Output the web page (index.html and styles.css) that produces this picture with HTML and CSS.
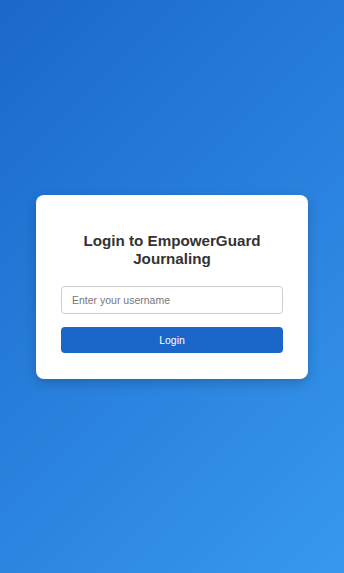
FILE: index.html
```html
<!DOCTYPE html>
<html lang="en">
<head>
<meta charset="utf-8">
<title>Login</title>
<link rel="stylesheet" href="styles.css">
</head>
<body>
<main class="page">
  <form class="card">
    <h2 class="title">Login to EmpowerGuard Journaling</h2>
    <input class="field" type="text" placeholder="Enter your username">
    <button class="btn" type="button">Login</button>
  </form>
</main>
</body>
</html>
```

FILE: styles.css
```css
html, body {
  margin: 0;
  padding: 0;
  height: 100%;
}
body {
  font-family: "Liberation Sans", Arial, sans-serif;
  background: linear-gradient(135deg, #1a68c9 0%, #3798ef 100%);
}
.page {
  height: 100%;
  display: flex;
  align-items: center;
  justify-content: center;
}
.card {
  box-sizing: border-box;
  width: 272px;
  background: #fff;
  border-radius: 8px;
  box-shadow: 0 4px 12px rgba(0, 0, 0, 0.2);
  padding: 37px 25px 26px;
  display: flex;
  flex-direction: column;
}
.title {
  margin: 0 0 18px;
  font-size: 15.2px;
  font-weight: bold;
  line-height: 18px;
  color: #333;
  text-align: center;
}
.field {
  box-sizing: border-box;
  height: 28px;
  width: 100%;
  border: 1px solid #ccc;
  border-radius: 4px;
  padding: 0 10px;
  font-family: inherit;
  font-size: 10.5px;
  color: #333;
  margin: 0 0 13px;
}
.field::placeholder {
  color: #777;
}
.btn {
  height: 26px;
  width: 100%;
  border: none;
  border-radius: 4px;
  background: #1a67c9;
  color: #fff;
  font-family: inherit;
  font-size: 10.5px;
  cursor: pointer;
}
```
